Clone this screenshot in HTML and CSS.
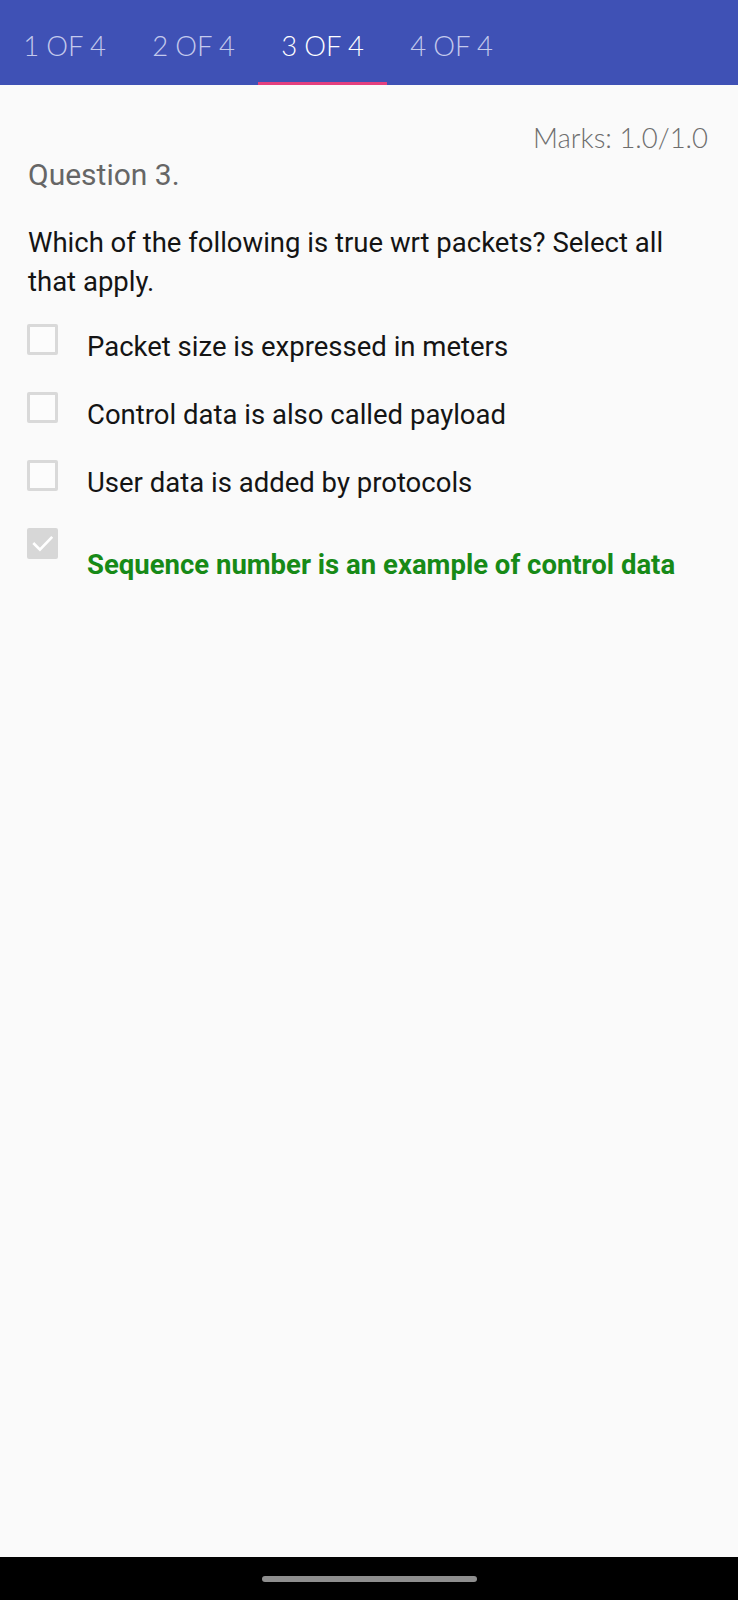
FILE: index.html
```html
<!DOCTYPE html>
<html lang="en">
<head>
<meta charset="utf-8">
<title>Question 3</title>
<link rel="stylesheet" href="styles.css">
</head>
<body>
<div class="screen">
  <nav class="tabs">
    <div class="tab">1 OF 4</div>
    <div class="tab">2 OF 4</div>
    <div class="tab tab-active">3 OF 4</div>
    <div class="tab">4 OF 4</div>
  </nav>
  <main class="content">
    <div class="marks">Marks: 1.0/1.0</div>
    <h2 class="qnum">Question 3.</h2>
    <p class="qtext">Which of the following is true wrt packets? Select all that apply.</p>
    <ul class="options">
      <li class="option">
        <span class="box"></span>
        <span class="label">Packet size is expressed in meters</span>
      </li>
      <li class="option">
        <span class="box"></span>
        <span class="label">Control data is also called payload</span>
      </li>
      <li class="option">
        <span class="box"></span>
        <span class="label">User data is added by protocols</span>
      </li>
      <li class="option">
        <span class="box box-checked">
          <svg viewBox="0 0 30 30" width="30" height="30"><path d="M7 15.5 L12.5 21 L23.5 9.5" fill="none" stroke="#ffffff" stroke-width="2.6" stroke-linecap="square"/></svg>
        </span>
        <span class="label label-correct">Sequence number is an example of control data</span>
      </li>
    </ul>
  </main>
  <div class="navbar"><span class="handle"></span></div>
</div>
</body>
</html>
```
FILE: styles.css
```css
html, body {
  margin: 0;
  padding: 0;
  background: #fafafa;
}
.screen {
  width: 738px;
  min-height: 1600px;
  display: flex;
  flex-direction: column;
  background: #fafafa;
}
.tabs {
  height: 85px;
  background: #3f51b5;
  display: flex;
  flex-shrink: 0;
}
.tab {
  width: 129px;
  height: 85px;
  box-sizing: border-box;
  display: flex;
  align-items: center;
  justify-content: center;
  padding-top: 6px;
  font-family: Lato, "Open Sans", sans-serif;
  font-weight: 300;
  font-size: 27.5px;
  color: #c4c9ec;
  letter-spacing: -0.2px;
}
.tab-active {
  color: #ffffff;
  box-shadow: inset 0 -3px 0 #e4407e;
}
.content {
  flex: 1;
  padding: 0 30px 0 28px;
}
.marks {
  margin-top: 36px;
  text-align: right;
  font-family: Lato, "Open Sans", sans-serif;
  font-weight: 300;
  font-size: 27.5px;
  line-height: 33px;
  color: #6e6e6e;
}
.qnum {
  margin: 3px 0 0;
  font-family: Roboto, "Liberation Sans", sans-serif;
  font-weight: 400;
  font-size: 30px;
  line-height: 36px;
  color: #666666;
}
.qtext {
  margin: 30px 0 0;
  font-family: Roboto, "Liberation Sans", sans-serif;
  font-size: 27.5px;
  line-height: 39px;
  color: #141414;
}
.options {
  list-style: none;
  margin: 23px 0 0 -1px;
  padding: 0;
  display: flex;
  flex-direction: column;
  gap: 29px;
}
.option {
  display: flex;
  align-items: flex-start;
  gap: 29px;
}
.box {
  width: 31px;
  height: 31px;
  box-sizing: border-box;
  border: 3px solid #d9d9d9;
  border-radius: 2px;
  background: #fcfcfc;
  flex-shrink: 0;
}
.box-checked {
  border: none;
  background: #d7d7d7;
}
.box-checked svg {
  display: block;
  width: 31px;
  height: 31px;
}
.label {
  padding-top: 6px;
  font-family: Roboto, "Liberation Sans", sans-serif;
  font-size: 27.5px;
  line-height: 33px;
  color: #141414;
}
.label-correct {
  padding-top: 20px;
  font-weight: 700;
  color: #178a17;
}
.navbar {
  height: 43px;
  background: #000000;
  display: flex;
  justify-content: center;
  align-items: center;
  flex-shrink: 0;
}
.handle {
  width: 215px;
  height: 6px;
  border-radius: 3px;
  background: #8e8e8e;
}
```
